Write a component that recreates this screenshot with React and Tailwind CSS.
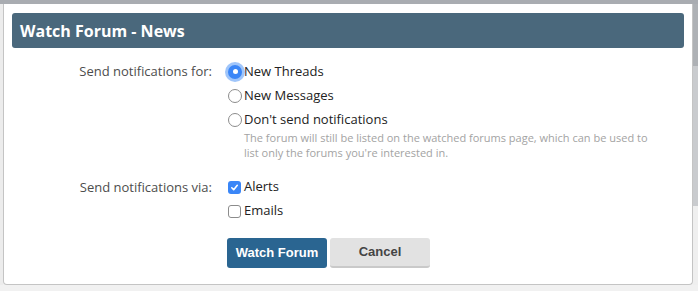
import React from "react";

function Radio({ checked }) {
  return checked ? (
    <span className="relative flex h-[14px] w-[14px] shrink-0 items-center justify-center rounded-full bg-[#3a86f7] shadow-[0_0_0_3px_rgba(80,150,245,0.55)]">
      <span className="h-[5px] w-[5px] rounded-full bg-white" />
    </span>
  ) : (
    <span className="h-[14px] w-[14px] shrink-0 rounded-full border border-[#8c8c8c] bg-white" />
  );
}

function Check({ checked }) {
  return checked ? (
    <span className="flex h-[13px] w-[13px] shrink-0 items-center justify-center rounded-[3px] bg-[#3a86f7]">
      <svg width="9" height="9" viewBox="0 0 9 9" fill="none">
        <path d="M1.8 4.8 L3.7 6.7 L7.3 2.3" stroke="white" strokeWidth="1.6" strokeLinecap="round" strokeLinejoin="round" />
      </svg>
    </span>
  ) : (
    <span className="h-[13px] w-[13px] shrink-0 rounded-[3px] border border-[#8c8c8c] bg-white" />
  );
}

export default function App() {
  const font = { fontFamily: '"Open Sans", "Liberation Sans", sans-serif' };
  return (
    <div className="h-[291px] w-[698px] overflow-hidden bg-[#f1f1f1]" style={font}>
      <div className="h-[4px] bg-[#a9acb1]" />
      <div className="flex">
        <div className="w-[3px] bg-[#ececec]" />
        <div className="h-[281px] w-[690px] rounded-b-[4px] border-b border-l border-r border-[#c4c4c4] bg-white px-[8px] pt-[9px]">
          <div className="flex h-[35px] items-center rounded-[3px] bg-[#4a687c] pl-[8px] text-[16px] font-bold text-white">
            Watch Forum - News
          </div>
          <div className="grid grid-cols-[200px_1fr] gap-x-[16px] pt-[11px] text-[13px]">
            <div className="h-[25px] text-right leading-[25px] text-[#4d4d4d]">Send notifications for:</div>
            <div className="flex flex-col text-[#222]">
              <label className="flex h-[25px] items-center gap-[2px]">
                <Radio checked />
                <span>New Threads</span>
              </label>
              <label className="flex h-[24px] items-center gap-[2px]">
                <Radio />
                <span>New Messages</span>
              </label>
              <label className="flex h-[24px] items-center gap-[2px]">
                <Radio />
                <span>Don't send notifications</span>
              </label>
              <div className="-mt-[2px] pl-[16px] text-[11px] leading-[15px] text-[#a3a3a3]">
                The forum will still be listed on the watched forums page, which can be used to
                <br />
                list only the forums you're interested in.
              </div>
            </div>

            <div className="mt-[15px] h-[24px] text-right leading-[24px] text-[#4d4d4d]">Send notifications via:</div>
            <div className="mt-[15px] flex flex-col text-[#222]">
              <label className="flex h-[24px] items-center gap-[3px]">
                <Check checked />
                <span>Alerts</span>
              </label>
              <label className="flex h-[24px] items-center gap-[3px]">
                <Check />
                <span>Emails</span>
              </label>
            </div>

            <div />
            <div className="-ml-[1px] mt-[15px] flex gap-[3px]" style={{ fontFamily: '"Liberation Sans", Arial, sans-serif' }}>
              <button className="h-[30px] w-[100px] rounded-[3px] bg-[#2a6591] text-[13px] font-bold text-white">
                Watch Forum
              </button>
              <button className="h-[30px] w-[100px] rounded-[3px] border-b-2 border-[#c9c9c9] bg-[#e2e2e2] text-[13px] font-bold text-[#444]">
                Cancel
              </button>
            </div>
          </div>
        </div>
        <div className="flex flex-1 flex-col">
          <div className="h-[62px] bg-[#aeb1b5]" />
          <div className="h-[140px] bg-[#c9cbce]" />
          <div className="flex-1 bg-[#efefef]" />
        </div>
      </div>
    </div>
  );
}
